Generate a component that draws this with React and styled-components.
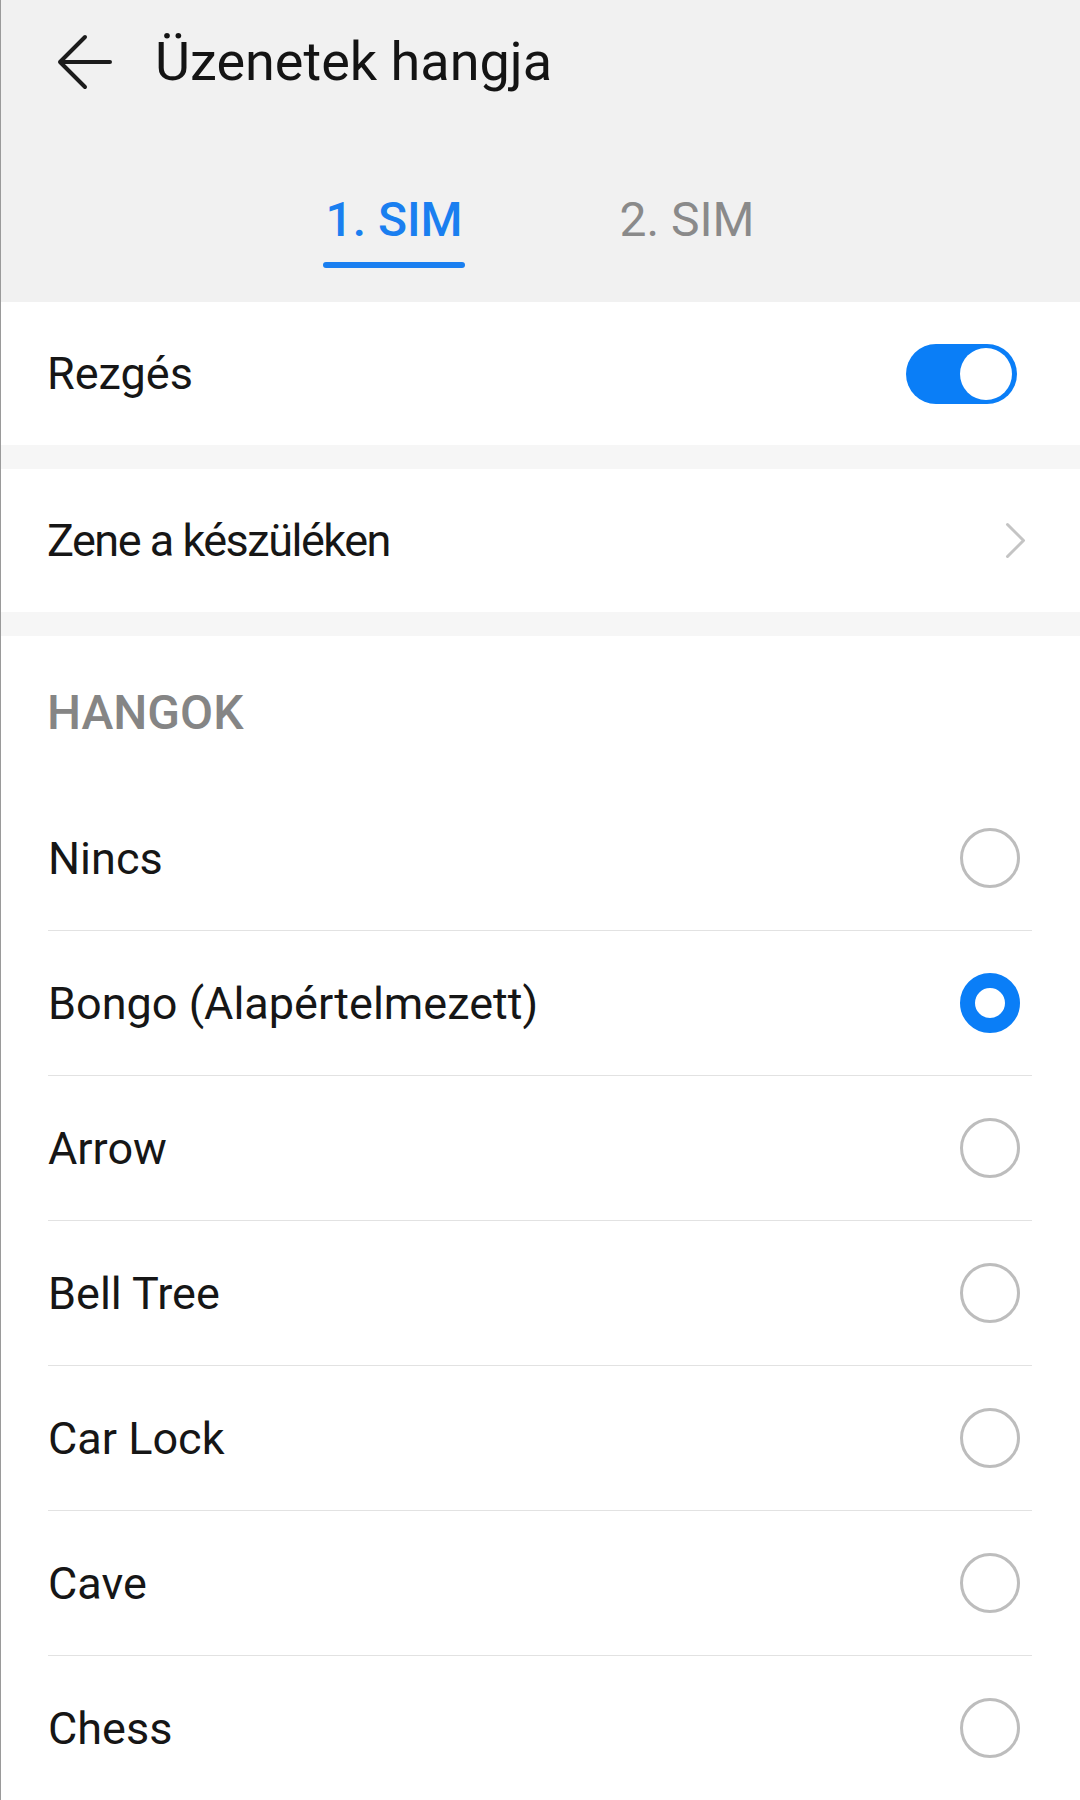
import React from 'react'
import styled, { createGlobalStyle } from 'styled-components'

const GlobalStyle = createGlobalStyle`
  body {
    margin: 0;
    background: #ffffff;
    font-family: Roboto, "Noto Sans", sans-serif;
  }
`

const sounds = ['Nincs', 'Bongo (Alapértelmezett)', 'Arrow', 'Bell Tree', 'Car Lock', 'Cave', 'Chess']

function BackArrow() {
  return (
    <svg width="56" height="56" viewBox="0 0 56 56" fill="none">
      <path d="M53 28H3M28 3L3 28L28 53" stroke="#1c1c1c" strokeWidth="4" strokeLinecap="round" strokeLinejoin="round" />
    </svg>
  )
}

function Chevron() {
  return (
    <svg width="21" height="37" viewBox="0 0 21 37" fill="none">
      <path d="M2.5 2.5L18.5 18.5L2.5 34.5" stroke="#c4c4c4" strokeWidth="3" strokeLinecap="round" strokeLinejoin="round" />
    </svg>
  )
}

function App() {
  return (
    <Screen>
      <GlobalStyle />
      <Header>
        <TitleBar>
          <BackArrow />
          <Title>Üzenetek hangja</Title>
        </TitleBar>
        <Tabs>
          <Tab>
            <TabLabel active>
              1. SIM
              <Underline />
            </TabLabel>
          </Tab>
          <Tab>
            <TabLabel>2. SIM</TabLabel>
          </Tab>
        </Tabs>
      </Header>

      <Card>
        <SettingRow>
          <Label>Rezgés</Label>
          <Toggle>
            <Knob />
          </Toggle>
        </SettingRow>
      </Card>

      <Card>
        <SettingRow>
          <Label tight>Zene a készüléken</Label>
          <ChevronBox>
            <Chevron />
          </ChevronBox>
        </SettingRow>
      </Card>

      <Card>
        <SectionTitle>HANGOK</SectionTitle>
        <List>
          {sounds.map((name, i) => (
            <SoundItem key={name} last={i === sounds.length - 1}>
              <Label>{name}</Label>
              <Radio checked={i === 1} />
            </SoundItem>
          ))}
        </List>
      </Card>
    </Screen>
  )
}

export default App

const Screen = styled.div`
  width: 1080px;
  height: 1800px;
  overflow: hidden;
  box-sizing: border-box;
  border-left: 1px solid #9a9a9a;
  background: #f6f6f6;
  display: flex;
  flex-direction: column;
  gap: 24px;
`

const Header = styled.div`
  background: #f1f1f1;
  height: 302px;
  flex-shrink: 0;
  display: flex;
  flex-direction: column;
  margin-bottom: -24px;
`

const TitleBar = styled.div`
  height: 124px;
  display: flex;
  align-items: center;
  padding-left: 56px;
  gap: 42px;
`

const Title = styled.div`
  font-size: 54px;
  line-height: 1;
  color: #141414;
`

const Tabs = styled.div`
  display: flex;
  justify-content: center;
  padding-top: 72px;
`

const Tab = styled.div`
  width: 293px;
  display: flex;
  justify-content: center;
`

const TabLabel = styled.div`
  display: flex;
  flex-direction: column;
  align-items: stretch;
  font-size: 48px;
  line-height: 1;
  font-weight: ${p => (p.active ? 500 : 400)};
  color: ${p => (p.active ? '#1a7ff0' : '#8a8a8a')};
`

const Underline = styled.div`
  height: 6px;
  border-radius: 3px;
  background: #1a7ff0;
  margin: 18px -2px 0;
`

const Card = styled.div`
  background: #ffffff;
  flex-shrink: 0;
`

const SettingRow = styled.div`
  height: 143px;
  display: flex;
  align-items: center;
  justify-content: space-between;
  padding-left: 46px;
`

const Label = styled.div`
  font-size: 45px;
  line-height: 1;
  color: #161616;
  letter-spacing: ${p => (p.tight ? '-1.5px' : 'normal')};
`

const Toggle = styled.div`
  width: 111px;
  height: 60px;
  border-radius: 30px;
  background: #0a7ef7;
  margin-right: 63px;
  box-sizing: border-box;
  padding: 4px 5px;
  display: flex;
  justify-content: flex-end;
  align-items: center;
`

const Knob = styled.div`
  width: 52px;
  height: 52px;
  border-radius: 50%;
  background: #ffffff;
`

const ChevronBox = styled.div`
  display: flex;
  margin-right: 54px;
`

const SectionTitle = styled.div`
  height: 150px;
  display: flex;
  align-items: center;
  padding-left: 46px;
  padding-top: 2px;
  box-sizing: border-box;
  font-size: 48px;
  font-weight: 500;
  color: #858585;
`

const List = styled.div`
  padding: 0 48px 0 47px;
`

const SoundItem = styled.div`
  height: 144px;
  display: flex;
  align-items: center;
  justify-content: space-between;
  border-bottom: ${p => (p.last ? 'none' : '1px solid #e2e2e2')};
`

const Radio = styled.div`
  width: 60px;
  height: 60px;
  box-sizing: border-box;
  border-radius: 50%;
  margin-right: 12px;
  background: #ffffff;
  border: ${p => (p.checked ? '15px solid #0a7ef7' : '3px solid #bdbdbd')};
`
